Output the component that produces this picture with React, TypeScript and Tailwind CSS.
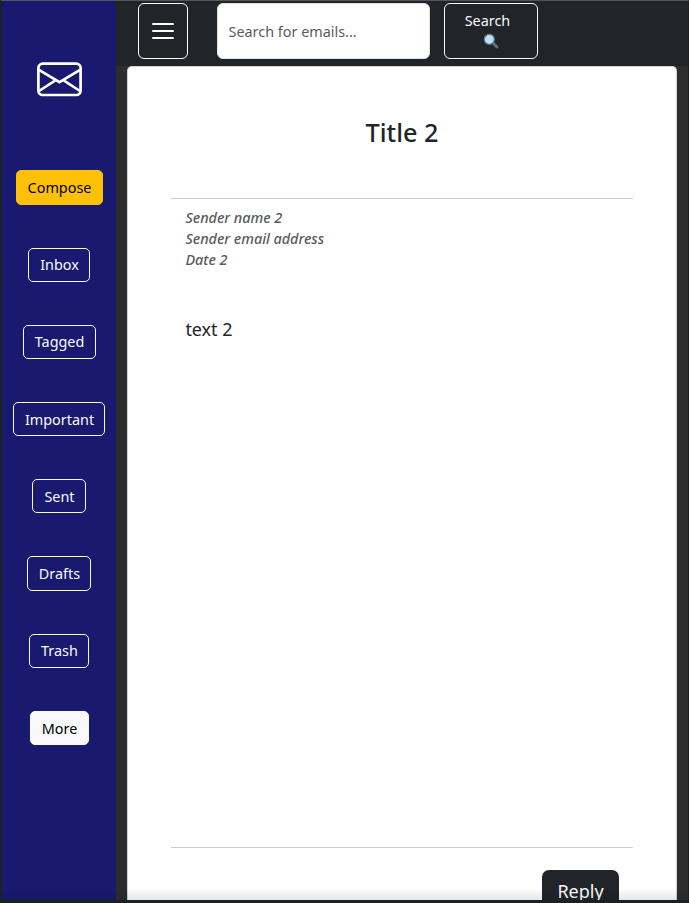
import React from "react";

type NavItem = { label: string; tone: string; box: string };

const outline = "border-[#f8f9fa] text-[#f8f9fa]";

const items: NavItem[] = [
  { label: "Compose", tone: "border-[#ffc107] bg-[#ffc107] text-black", box: "h-[35px] w-[87px] mb-[43px]" },
  { label: "Inbox", tone: outline, box: "h-[34px] w-[62px] mb-[43px]" },
  { label: "Tagged", tone: outline, box: "h-[34px] w-[73px] mb-[43px]" },
  { label: "Important", tone: outline, box: "h-[34px] w-[92px] mb-[43px] pt-[2px]" },
  { label: "Sent", tone: outline, box: "h-[34px] w-[54px] mb-[43px] pt-[2px]" },
  { label: "Drafts", tone: outline, box: "h-[35px] w-[64px] mb-[43px]" },
  { label: "Trash", tone: outline, box: "h-[34px] w-[60px] mb-[43px]" },
  { label: "More", tone: "border-[#f8f9fa] bg-[#f8f9fa] text-black", box: "h-[34px] w-[59px] pt-[2px]" },
];

function Sidebar() {
  return (
    <nav className="flex w-[114px] shrink-0 flex-col items-center bg-[#191970]">
      <svg className="mt-[61px] mb-[73px] h-[35px] w-[45px] shrink-0" viewBox="0 0 45 35" fill="none" stroke="white">
        <rect x="1.4" y="1.7" width="42.2" height="31.3" rx="4.3" strokeWidth="2.7" />
        <path d="M2 7.8 L22.5 20.2 L43 7.8 M2 29 L18 18.7 M43 29 L27 18.7" strokeWidth="2.6" />
      </svg>
      {items.map((item) => (
        <button
          key={item.label}
          className={`flex shrink-0 items-center justify-center rounded-[5px] border pl-px text-[14.4px] leading-[21.6px] whitespace-nowrap ${item.tone} ${item.box}`}
        >
          {item.label}
        </button>
      ))}
    </nav>
  );
}

function Header() {
  return (
    <header className="flex h-[65px] shrink-0 items-start bg-[#212529] pt-[2px] pl-[22px]">
      <button aria-label="Menu" className="flex h-[56px] w-[50px] items-center justify-center rounded-[6px] border border-white">
        <svg width="22" height="18" viewBox="0 0 22 18" stroke="white" strokeWidth="2">
          <path d="M1 2H21M1 9H21M1 16H21" strokeLinecap="round" />
        </svg>
      </button>
      <input
        placeholder="Search for emails..."
        className="ml-[29px] h-[56px] w-[213px] rounded-[6px] border border-[#dee2e6] bg-white px-[10.5px] text-[14.4px] leading-[21.6px] placeholder:text-[#595c5f]"
      />
      <button className="ml-[14px] flex h-[56px] w-[94px] flex-col items-center rounded-[6px] border border-[#f8f9fa] pt-[6px] text-[14.4px] leading-[21.6px] text-[#f8f9fa]">
        <span className="-ml-[7px]">Search</span>
        <svg className="mt-px h-[16px] w-[16px]" viewBox="0 0 16 16">
          <path d="M10 10L14 14" stroke="#62737a" strokeWidth="2.8" strokeLinecap="round" />
          <circle cx="6.3" cy="6.3" r="5" fill="#bbdefb" stroke="#607d8b" strokeWidth="1.2" />
        </svg>
      </button>
    </header>
  );
}

function Message() {
  return (
    <article className="ml-[11px] flex min-h-0 w-[550px] flex-1 flex-col overflow-hidden rounded-t-[5px] border border-b-0 border-[#d2d3d4] bg-white px-[43px] text-[#212529]">
      <h1 className="mt-[49px] text-center text-[25.2px] leading-[32px] font-medium">Title 2</h1>
      <hr className="mt-[50px] border-[#cccdcd]" />
      <h6 className="mt-[8px] ml-[14.5px] text-[14.4px] leading-[21px] font-medium tracking-[-0.04px] text-[#595c5f] italic">
        Sender name 2<br />
        Sender email address<br />
        Date 2
      </h6>
      <p className="mt-[46px] ml-[14.4px] text-[18px] leading-[27px] tracking-[-0.05px]">text 2</p>
      <hr className="mt-[504px] border-[#cccdcd]" />
      <button className="mt-[22px] mr-[14px] h-[43px] w-[77px] shrink-0 self-end rounded-[7px] bg-[#212529] text-[18px] leading-[27px] text-white">
        Reply
      </button>
    </article>
  );
}

export default function App() {
  return (
    <div className="relative flex h-[903px] w-[689px] overflow-hidden border-t border-r border-b-[3px] border-l-2 border-t-[#555555] border-r-[#1b2224] border-b-[#1b2023] border-l-[#1b2224] bg-[#2d2d2d] font-['Noto_Sans',sans-serif]">
      <Sidebar />
      <main className="flex min-w-0 flex-1 flex-col">
        <Header />
        <Message />
      </main>
      <div className="pointer-events-none absolute inset-x-0 bottom-0 h-[12px] bg-linear-to-b from-transparent to-black/10" />
    </div>
  );
}
